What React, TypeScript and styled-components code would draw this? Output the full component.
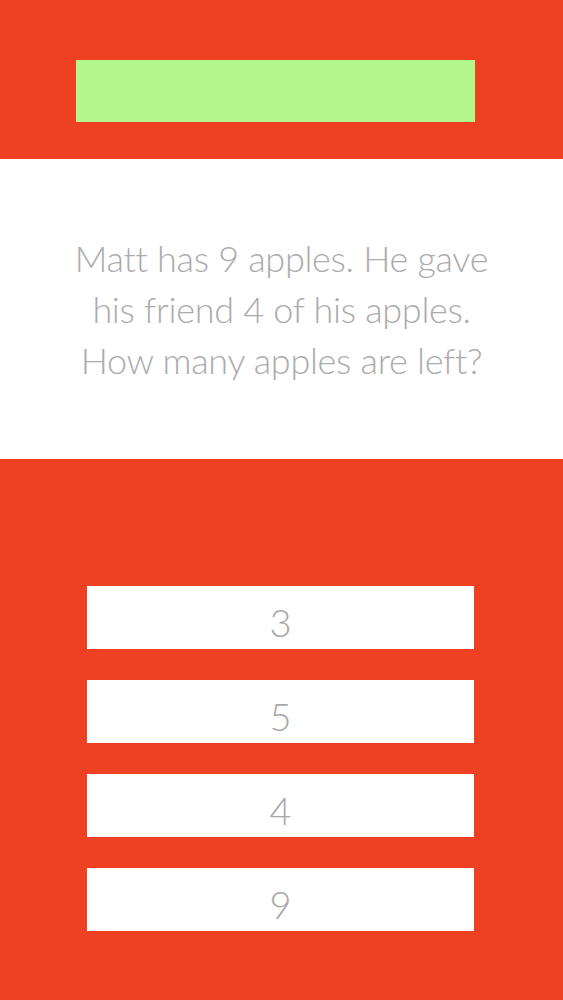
import React from "react";
import styled, { createGlobalStyle } from "styled-components";

const Global = createGlobalStyle`
  html, body { margin: 0; padding: 0; background: #ee4124; }
  body { font-family: Lato, "Open Sans", sans-serif; }
`;

const Page = styled.div`
  display: flex;
  flex-direction: column;
  width: 563px;
  height: 1000px;
  background: #ee4124;
`;

const Header = styled.header`
  height: 159px;
  display: flex;
  justify-content: flex-start;
  padding: 60px 0 0 76px;
  box-sizing: border-box;
`;

const Progress = styled.div`
  width: 399px;
  height: 62px;
  background: #b3f78c;
`;

const QuestionPanel = styled.section`
  height: 300px;
  background: #ffffff;
  display: flex;
  align-items: center;
  justify-content: center;
`;

const Question = styled.p`
  margin: 0;
  width: 440px;
  text-align: center;
  font-family: Lato, sans-serif;
  font-weight: 300;
  font-size: 36px;
  line-height: 51px;
  color: #ababab;
  letter-spacing: -0.3px;
`;

const Answers = styled.div`
  display: flex;
  flex-direction: column;
  align-items: flex-start;
  gap: 31px;
  padding: 127px 0 0 87px;
`;

const Answer = styled.button`
  width: 387px;
  height: 63px;
  border: none;
  background: #ffffff;
  font-family: Lato, sans-serif;
  font-weight: 300;
  font-size: 38px;
  color: #a8a8a8;
  display: flex;
  align-items: center;
  justify-content: center;
  padding: 8px 0 0;
  box-sizing: border-box;
  cursor: pointer;
`;

const answers = ["3", "5", "4", "9"];

export default function App() {
  return (
    <Page>
      <Global />
      <Header>
        <Progress />
      </Header>
      <QuestionPanel>
        <Question>
          Matt has 9 apples. He gave his friend 4 of his apples. How many apples are left?
        </Question>
      </QuestionPanel>
      <Answers>
        {answers.map((a) => (
          <Answer key={a}>{a}</Answer>
        ))}
      </Answers>
    </Page>
  );
}
